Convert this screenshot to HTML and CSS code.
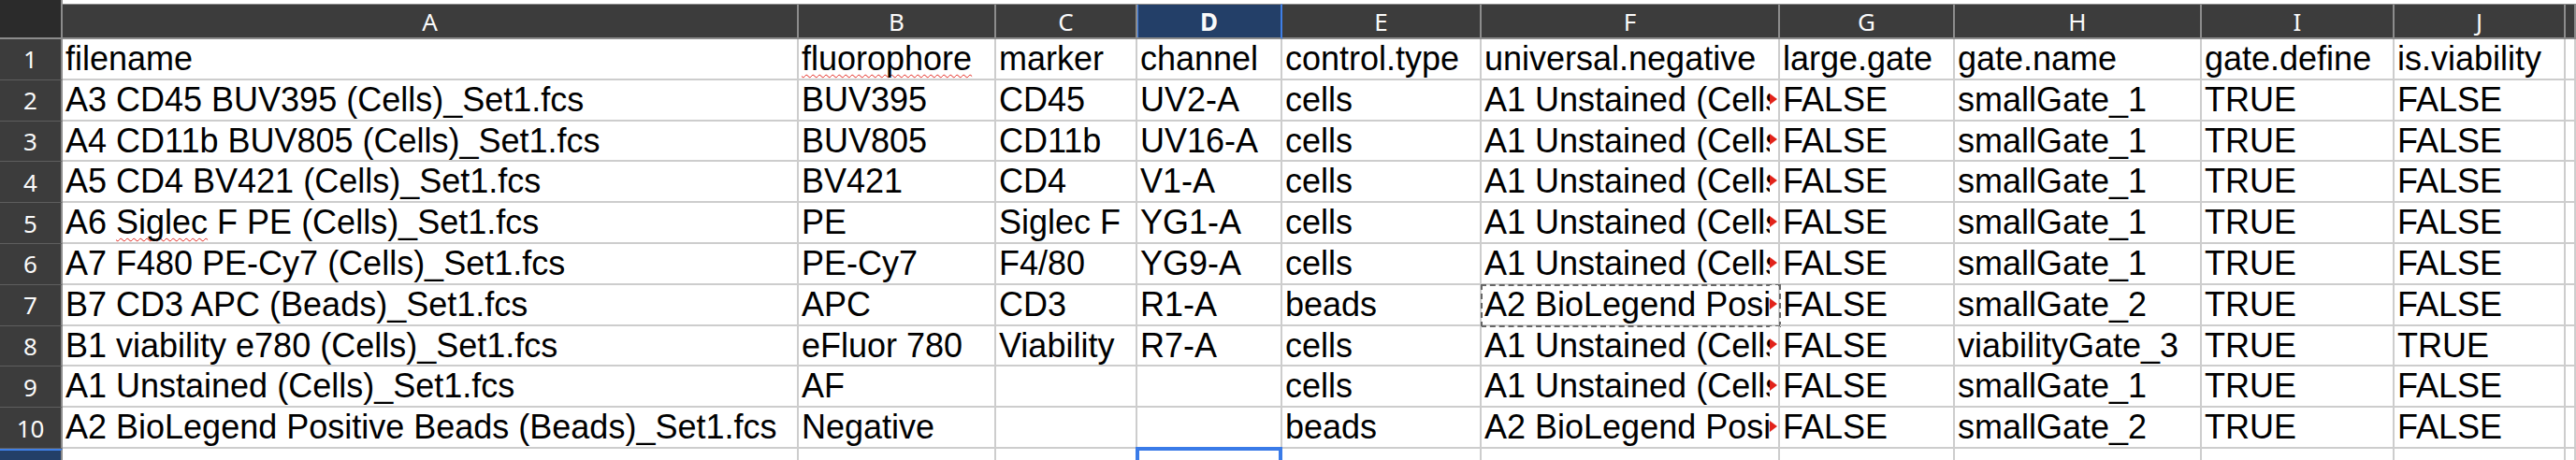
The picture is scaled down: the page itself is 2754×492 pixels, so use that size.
FILE: index.html
```html
<!DOCTYPE html>
<html lang="en">
<head>
    <meta charset="UTF-8">
    <title>controls.csv</title>
    <link rel="stylesheet" href="styles.css">
</head>
<body>
    <div class="sheet">
        <!-- column headers -->
        <div class="corner"></div>
        <div class="col-head">A</div>
        <div class="col-head">B</div>
        <div class="col-head">C</div>
        <div class="col-head active">D</div>
        <div class="col-head">E</div>
        <div class="col-head">F</div>
        <div class="col-head">G</div>
        <div class="col-head">H</div>
        <div class="col-head">I</div>
        <div class="col-head">J</div>
        <div class="col-head"></div>

        <div class="row-head">1</div>
        <div class="cell">filename</div>
        <div class="cell"><span class="typo">fluorophore</span></div>
        <div class="cell">marker</div>
        <div class="cell">channel</div>
        <div class="cell">control.type</div>
        <div class="cell">universal.negative</div>
        <div class="cell">large.gate</div>
        <div class="cell">gate.name</div>
        <div class="cell">gate.define</div>
        <div class="cell">is.viability</div>
        <div class="cell"></div>

        <div class="row-head">2</div>
        <div class="cell">A3 CD45 BUV395 (Cells)_Set1.fcs</div>
        <div class="cell">BUV395</div>
        <div class="cell">CD45</div>
        <div class="cell">UV2-A</div>
        <div class="cell">cells</div>
        <div class="cell more">A1 Unstained (Cells)_Set1.fcs</div>
        <div class="cell">FALSE</div>
        <div class="cell">smallGate_1</div>
        <div class="cell">TRUE</div>
        <div class="cell">FALSE</div>
        <div class="cell"></div>

        <div class="row-head">3</div>
        <div class="cell">A4 CD11b BUV805 (Cells)_Set1.fcs</div>
        <div class="cell">BUV805</div>
        <div class="cell">CD11b</div>
        <div class="cell">UV16-A</div>
        <div class="cell">cells</div>
        <div class="cell more">A1 Unstained (Cells)_Set1.fcs</div>
        <div class="cell">FALSE</div>
        <div class="cell">smallGate_1</div>
        <div class="cell">TRUE</div>
        <div class="cell">FALSE</div>
        <div class="cell"></div>

        <div class="row-head">4</div>
        <div class="cell">A5 CD4 BV421 (Cells)_Set1.fcs</div>
        <div class="cell">BV421</div>
        <div class="cell">CD4</div>
        <div class="cell">V1-A</div>
        <div class="cell">cells</div>
        <div class="cell more">A1 Unstained (Cells)_Set1.fcs</div>
        <div class="cell">FALSE</div>
        <div class="cell">smallGate_1</div>
        <div class="cell">TRUE</div>
        <div class="cell">FALSE</div>
        <div class="cell"></div>

        <div class="row-head">5</div>
        <div class="cell">A6 <span class="typo">Siglec</span> F PE (Cells)_Set1.fcs</div>
        <div class="cell">PE</div>
        <div class="cell">Siglec F</div>
        <div class="cell">YG1-A</div>
        <div class="cell">cells</div>
        <div class="cell more">A1 Unstained (Cells)_Set1.fcs</div>
        <div class="cell">FALSE</div>
        <div class="cell">smallGate_1</div>
        <div class="cell">TRUE</div>
        <div class="cell">FALSE</div>
        <div class="cell"></div>

        <div class="row-head">6</div>
        <div class="cell">A7 F480 PE-Cy7 (Cells)_Set1.fcs</div>
        <div class="cell">PE-Cy7</div>
        <div class="cell">F4/80</div>
        <div class="cell">YG9-A</div>
        <div class="cell">cells</div>
        <div class="cell more">A1 Unstained (Cells)_Set1.fcs</div>
        <div class="cell">FALSE</div>
        <div class="cell">smallGate_1</div>
        <div class="cell">TRUE</div>
        <div class="cell">FALSE</div>
        <div class="cell"></div>

        <div class="row-head">7</div>
        <div class="cell">B7 CD3 APC (Beads)_Set1.fcs</div>
        <div class="cell">APC</div>
        <div class="cell">CD3</div>
        <div class="cell">R1-A</div>
        <div class="cell">beads</div>
        <div class="cell more copied">A2 BioLegend Positive Beads (Beads)_Set1.fcs</div>
        <div class="cell">FALSE</div>
        <div class="cell">smallGate_2</div>
        <div class="cell">TRUE</div>
        <div class="cell">FALSE</div>
        <div class="cell"></div>

        <div class="row-head">8</div>
        <div class="cell">B1 viability e780 (Cells)_Set1.fcs</div>
        <div class="cell">eFluor 780</div>
        <div class="cell">Viability</div>
        <div class="cell">R7-A</div>
        <div class="cell">cells</div>
        <div class="cell more">A1 Unstained (Cells)_Set1.fcs</div>
        <div class="cell">FALSE</div>
        <div class="cell">viabilityGate_3</div>
        <div class="cell">TRUE</div>
        <div class="cell">TRUE</div>
        <div class="cell"></div>

        <div class="row-head">9</div>
        <div class="cell">A1 Unstained (Cells)_Set1.fcs</div>
        <div class="cell">AF</div>
        <div class="cell"></div>
        <div class="cell"></div>
        <div class="cell">cells</div>
        <div class="cell more">A1 Unstained (Cells)_Set1.fcs</div>
        <div class="cell">FALSE</div>
        <div class="cell">smallGate_1</div>
        <div class="cell">TRUE</div>
        <div class="cell">FALSE</div>
        <div class="cell"></div>

        <div class="row-head">10</div>
        <div class="cell">A2 BioLegend Positive Beads (Beads)_Set1.fcs</div>
        <div class="cell">Negative</div>
        <div class="cell"></div>
        <div class="cell"></div>
        <div class="cell">beads</div>
        <div class="cell more">A2 BioLegend Positive Beads (Beads)_Set1.fcs</div>
        <div class="cell">FALSE</div>
        <div class="cell">smallGate_2</div>
        <div class="cell">TRUE</div>
        <div class="cell">FALSE</div>
        <div class="cell"></div>

        <div class="row-head current"></div>
        <div class="cell"></div>
        <div class="cell"></div>
        <div class="cell"></div>
        <div class="cell cursor"></div>
        <div class="cell"></div>
        <div class="cell"></div>
        <div class="cell"></div>
        <div class="cell"></div>
        <div class="cell"></div>
        <div class="cell"></div>
        <div class="cell"></div>
    </div>
</body>
</html>
```

FILE: styles.css
```css
body {
    margin: 0;
    background-color: #fff;
    font-family: 'Liberation Sans', Arial, sans-serif;
}

.sheet {
    display: grid;
    grid-template-columns: 67px 787px 211px 151px 155px 213px 319px 187px 264px 206px 183px 1fr;
    grid-template-rows: 42px repeat(11, 43.8px);
    height: 492px;
    overflow: hidden;
    background-color: #fff;
}

/* headers */
.corner {
    background-color: #2b2b2b;
    border-right: 2px solid #8c8c8c;
    border-bottom: 2px solid #8c8c8c;
}

.col-head {
    margin-top: 4px;
    background-color: #3c3c3c;
    border-top: 1px solid #8c8c8c;
    border-right: 2px solid #8c8c8c;
    border-bottom: 2px solid #8c8c8c;
    color: #fafafa;
    font-family: 'Noto Sans', sans-serif;
    font-size: 26px;
    display: flex;
    align-items: center;
    justify-content: center;
}

.col-head.active {
    background-color: #233f68;
    border-right-color: #3f7fe6;
    box-shadow: inset 1px 0 0 #3f7fe6;
    font-weight: bold;
}

.row-head {
    background-color: #3c3c3c;
    border-right: 2px solid #8c8c8c;
    border-bottom: 1px solid #5e5e5e;
    color: #fafafa;
    font-family: 'Noto Sans', sans-serif;
    font-size: 26px;
    display: flex;
    align-items: center;
    justify-content: center;
}

.row-head.current {
    background-color: #233f68;
    border-top: 2px solid #3f7fe6;
}

/* cells */
.cell {
    position: relative;
    border-right: 2px solid #cdcdcd;
    border-bottom: 2px solid #cdcdcd;
    padding-left: 3px;
    color: #000;
    font-size: 36px;
    line-height: 41.8px;
    white-space: nowrap;
    overflow: hidden;
}

.typo {
    text-decoration: underline wavy #e2231a;
    text-decoration-thickness: 1px;
    text-underline-offset: 4px;
    text-decoration-skip-ink: none;
}

/* text cut off by the next cell: blank strip plus red arrow */
.cell.more::before {
    content: "";
    position: absolute;
    right: 0;
    top: 0;
    bottom: 0;
    width: 9px;
    background-color: #fff;
}

.cell.more::after {
    content: "";
    position: absolute;
    right: 1px;
    top: 50%;
    margin-top: -7px;
    border-left: 8px solid #e2231a;
    border-top: 6px solid transparent;
    border-bottom: 6px solid transparent;
}

.cell.copied {
    outline: 2px dashed #666;
    outline-offset: -1px;
}

.cell.cursor {
    overflow: visible;
}

.cell.cursor::before {
    content: "";
    position: absolute;
    top: -2px;
    left: -2px;
    right: -2px;
    bottom: 0;
    border: 4px solid #3a7be8;
}
```
